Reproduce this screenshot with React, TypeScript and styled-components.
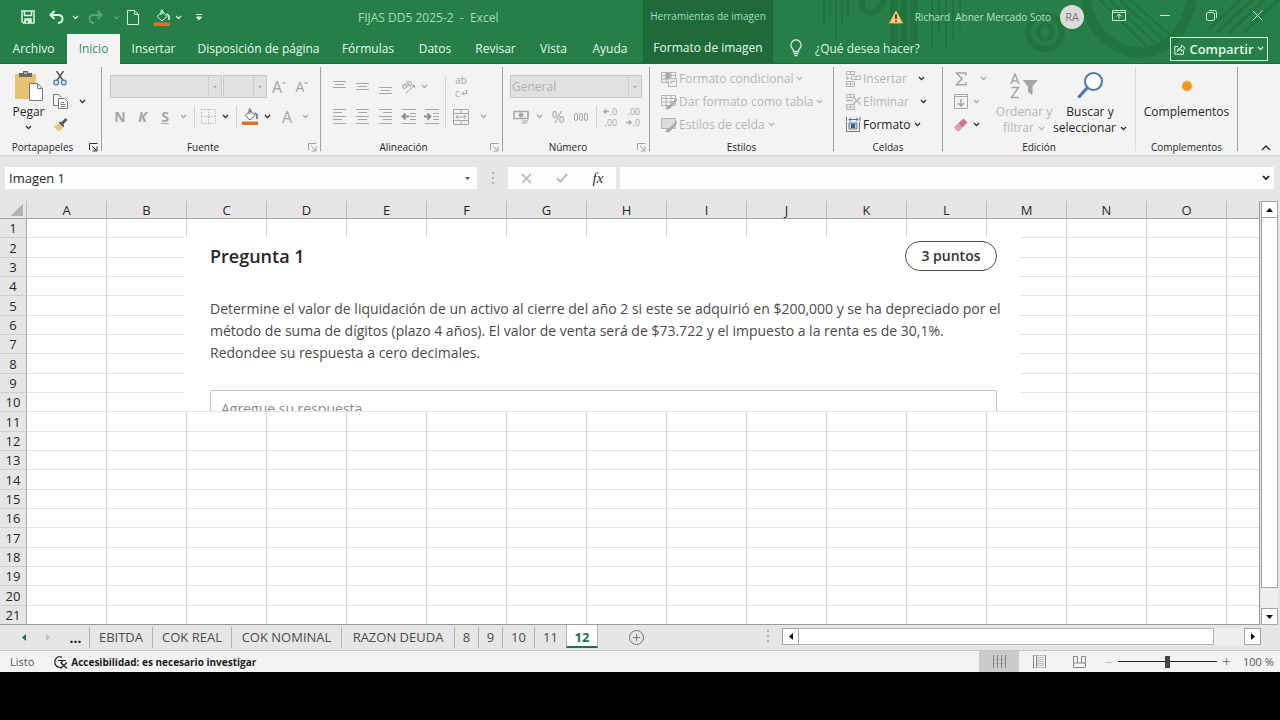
import React from "react";
import styled, { createGlobalStyle, css } from "styled-components";

const GlobalStyle = createGlobalStyle`
  *, *::before, *::after { box-sizing: border-box; }
  body {
    margin: 0;
    background: #000;
    font-family: "Open Sans", "Noto Sans", sans-serif;
    font-size: 12px;
    color: #262626;
  }
  button, input, select { font: inherit; color: inherit; margin: 0; }
  button { padding: 0; border: 0; background: none; }
  svg { display: block; flex: none; }
`;

const GREEN = "#267f47";
const DARK_GREEN = "#1f6a3b";
const MINT = "#d6f5df";
const CHROME = "#e6e6e6";
const RIBBON = "#f3f3f3";
const MUTED = "#a6a6a6";

/* ---------- Shared pieces ---------- */

const Window = styled.div`
  display: flex;
  flex-direction: column;
  background: ${CHROME};
`;

const IconButton = styled.button<{ $w: number; $off?: boolean }>`
  display: flex;
  align-items: center;
  justify-content: center;
  flex: none;
  width: ${(p) => p.$w}px;
  height: 23px;
  color: ${(p) => (p.$off ? MUTED : "#262626")};
`;

const Art = ({ w, h, children, sw = 1 }: { w: number; h: number; children: React.ReactNode; sw?: number }) => (
  <svg width={w} height={h} viewBox={`0 0 ${w} ${h}`} fill="none" stroke="currentColor" strokeWidth={sw} aria-hidden="true">
    {children}
  </svg>
);

const Chevron = () => (
  <Art w={7} h={5} sw={1.2}>
    <path d="M1 1 3.5 3.7 6 1" />
  </Art>
);

const Drop = ({ w, off, label }: { w: number; off?: boolean; label: string }) => (
  <IconButton $w={w} $off={off} aria-label={label}>
    <Chevron />
  </IconButton>
);

/* ---------- Header ---------- */

const Header = styled.header`
  position: relative;
  display: flex;
  height: 64px;
  background: ${GREEN};
  color: ${MINT};
  border-bottom: 1px solid #1d6a3a;
`;

const Pattern = styled.svg`
  position: absolute;
  top: 0;
  right: 0;
`;

const HeaderLeft = styled.div`
  flex: none;
  width: 643px;
`;

const QuickAccess = styled.div`
  display: flex;
  align-items: center;
  height: 34px;
  padding-left: 16px;
  button { color: ${MINT}; height: 32px; }
  button:disabled { color: #5aa475; }
`;

const DocTitle = styled.div`
  flex: 1;
  padding-left: 139px;
  white-space: pre;
  color: #a5dcb7;
`;

const TabRow = styled.nav`
  display: flex;
  height: 29px;
`;

const Tab = styled.button<{ $w: number; $active?: boolean }>`
  width: ${(p) => p.$w}px;
  height: 30px;
  padding-bottom: 2px;
  flex: none;
  white-space: nowrap;
  color: ${(p) => (p.$active ? "#3d8a58" : "#e4fbe9")};
  background: ${(p) => (p.$active ? RIBBON : "transparent")};
`;

const ContextTab = styled.div`
  flex: none;
  width: 130px;
  background: ${DARK_GREEN};
  display: flex;
  flex-direction: column;
  align-items: center;
`;

const ContextTitle = styled.div`
  height: 34px;
  line-height: 32px;
  font-size: 10px;
  white-space: nowrap;
  color: #a5dcb7;
`;

const HeaderRight = styled.div`
  position: relative;
  flex: 1;
`;

const AccountRow = styled.div`
  display: flex;
  align-items: center;
  justify-content: flex-end;
  height: 33px;
`;

const UserName = styled.span`
  margin: 0 9px 0 12px;
  font-size: 10px;
  white-space: pre;
  color: #b5e3c3;
`;

const Avatar = styled.span`
  width: 24px;
  height: 24px;
  margin-right: 12px;
  border-radius: 50%;
  background: #dcdcdc;
  color: #777;
  font-size: 11px;
  line-height: 24px;
  text-align: center;
`;

const WindowButton = styled.button`
  width: 46px;
  height: 33px;
  padding-bottom: 2px;
  display: flex;
  align-items: center;
  justify-content: center;
  color: #c4ecd0;
`;

const TellRow = styled.div`
  display: flex;
  align-items: center;
  height: 30px;
  padding: 0 12px 0 15px;
`;

const TellInput = styled.input`
  flex: 1;
  min-width: 0;
  margin-left: 11px;
  padding: 0;
  border: 0;
  background: none;
  outline: none;
  &::placeholder { color: #d9f7e1; opacity: 1; }
`;

const ShareButton = styled.button`
  display: flex;
  align-items: center;
  justify-content: space-between;
  width: 98px;
  height: 24px;
  margin-top: 1px;
  padding: 0 3px;
  border: 1px solid #c9f3d5;
  color: #e4fbe9;
  font-weight: 600;
  font-size: 13px;
`;

/* ---------- Ribbon ---------- */

const Ribbon = styled.div`
  display: flex;
  height: 91px;
  padding-top: 3px;
  background: ${RIBBON};
`;

const Group = styled.section<{ $w: number }>`
  flex: none;
  display: flex;
  flex-direction: column;
  width: ${(p) => p.$w}px;
  height: 88px;
`;

const Divider = styled.div<{ $light?: boolean }>`
  flex: none;
  width: 1px;
  height: 84px;
  background: ${(p) => (p.$light ? "#dcdcdc" : "#a0a0a0")};
`;

const Body = styled.div<{ $pad?: number }>`
  display: flex;
  height: 72px;
  padding-left: ${(p) => p.$pad ?? 0}px;
`;

const Caption = styled.div`
  display: flex;
  align-items: center;
  height: 16px;
  font-size: 10px;
  span { flex: 1; text-align: center; }
  button { width: 16px; height: 16px; display: flex; align-items: center; justify-content: center; }
`;

const Stack = styled.div`
  display: flex;
  flex-direction: column;
`;

const TwoRows = styled(Stack)`
  padding-top: 8px;
  gap: 7px;
`;

const Row = styled.div`
  display: flex;
  align-items: center;
  height: 23px;
`;

const ThinRule = styled.div<{ $w: number; $h?: number }>`
  flex: none;
  width: ${(p) => p.$w}px;
  height: ${(p) => p.$h ?? 22}px;
  background: linear-gradient(#d4d4d4, #d4d4d4) center / 1px 100% no-repeat;
`;

const BigButton = styled.button<{ $w: number; $off?: boolean }>`
  display: flex;
  flex-direction: column;
  align-items: center;
  flex: none;
  width: ${(p) => p.$w}px;
  color: ${(p) => (p.$off ? "#b4b4b4" : "#262626")};
  line-height: 16px;
  white-space: nowrap;
`;

const BigIcon = styled.span`
  display: flex;
  align-items: center;
  justify-content: center;
  height: 37px;
`;

const Inline = styled.span`
  display: flex;
  align-items: center;
  gap: 4px;
  min-height: 14px;
`;

const Command = styled.button<{ $off?: boolean; $gap?: number }>`
  display: flex;
  align-items: center;
  height: 23px;
  gap: 2px;
  white-space: nowrap;
  color: ${(p) => (p.$off ? "#b4b4b4" : "#262626")};
  svg:last-child { margin-left: ${(p) => p.$gap ?? 1}px; color: ${(p) => (p.$off && !p.$gap ? "#b4b4b4" : "#262626")}; }
`;

const SelectBox = styled.div<{ $w: number }>`
  position: relative;
  width: ${(p) => p.$w}px;
  height: 23px;
  border: 1px solid #c6c6c6;
  background: #e1e1e1;
  color: #b0b0b0;
  select {
    width: 100%;
    height: 100%;
    padding: 0 1px;
    border: 0;
    background: none;
    appearance: none;
    color: inherit;
    opacity: 1;
  }
  svg { position: absolute; right: 0; top: 0; }
`;

const Select = ({ w, label, text }: { w: number; label: string; text?: string }) => (
  <SelectBox $w={w}>
    <select aria-label={label} disabled>
      <option>{text ?? ""}</option>
    </select>
    <Art w={13} h={21}>
      <path d="M.5 0V21" stroke="#cdcdcd" />
      <path d="M5 10H9L7 12.2Z" fill="#a8a8a8" stroke="none" />
    </Art>
  </SelectBox>
);

const Letter = styled.span<{ $size?: number; $bold?: boolean; $italic?: boolean; $under?: boolean }>`
  font-size: ${(p) => p.$size ?? 14}px;
  font-weight: ${(p) => (p.$bold ? 700 : 400)};
  font-style: ${(p) => (p.$italic ? "italic" : "normal")};
  text-decoration: ${(p) => (p.$under ? "underline" : "none")};
`;

const RibbonEnd = styled.div`
  flex: 1;
  display: flex;
  align-items: flex-end;
  justify-content: flex-end;
  padding-right: 6px;
  height: 92px;
`;

const Launcher = ({ off }: { off?: boolean }) => (
  <button aria-label="Más opciones">
    <Art w={9} h={9}>
      <g stroke={off ? "#a0a0a0" : "#333"}>
        <path d="M.5 7V.5H8.5M3 3 7.5 7.5M8 3.5V8H3.5" />
      </g>
    </Art>
  </button>
);

const GroupCaption = ({ text, launcher }: { text: string; launcher?: "on" | "off" }) => (
  <Caption>
    <span>{text}</span>
    {launcher && <Launcher off={launcher === "off"} />}
  </Caption>
);

const Bucket = ({ light }: { light?: boolean }) => (
  <Art w={17} h={17}>
    <path d="M3 7.5 8.5 2.5 13 7.5 8 12Z" fill={light ? "none" : "#fff"} stroke={light ? MINT : "#666"} />
    <path d="M7 6V1.5Q7-.2 8.8 1.5V5" stroke={light ? MINT : "#666"} />
    <path d="M12.5 5Q16 6 14.8 11" stroke={light ? MINT : "#3f78b5"} strokeWidth="1.6" />
    <path d="M0 13.5H16V17H0Z" fill="#e0712a" stroke="none" />
  </Art>
);

const Lines = ({ ys, kind = "center" }: { ys: number[]; kind?: "left" | "center" | "right" }) => (
  <Art w={15} h={17}>
    {ys.map((y, i) => {
      const short = i % 2 === 1;
      const x1 = !short || kind === "left" ? 1 : kind === "center" ? 3 : 5;
      const x2 = !short || kind === "right" ? 14 : kind === "center" ? 12 : 10;
      return <path key={y} d={`M${x1} ${y + 0.5}H${x2}`} />;
    })}
  </Art>
);

const Indent = ({ right }: { right?: boolean }) => (
  <Art w={16} h={17}>
    <path d="M1 1.5H15M9 5.5H15M9 8.5H15M9 11.5H15M1 15.5H15" />
    <path d={right ? "M0 8.5H6M3.5 5.5 6.5 8.5 3.5 11.5" : "M8 8.5H2M4.5 5.5 1.5 8.5 4.5 11.5"} stroke="#8c8c8c" strokeWidth="1.8" />
  </Art>
);

const StyleIcon = ({ kind }: { kind: "cond" | "table" | "cell" }) => (
  <Art w={16} h={16}>
    <path d="M.5 1.5H14.5V11.5H.5Z" fill={kind === "cell" ? "#ddd" : "none"} />
    {kind !== "cell" && <path d="M.5 4.5H14.5M.5 8H14.5M5 1.5V11.5M10 1.5V11.5" />}
    {kind === "cond" ? (
      <>
        <path d="M5 2H9V8H5Z" fill="#a6a6a6" />
        <path d="M7.5 7.5H15.5V15.5H7.5Z" fill={RIBBON} />
        <path d="M9 13 13.5 9M9 10.5H14" />
      </>
    ) : (
      <path d="M15.5 4 9 11Q5 11 5 15 9 15.5 10.5 12.5L16 6" fill="#a6a6a6" />
    )}
  </Art>
);

const CellIcon = ({ kind }: { kind: "insert" | "delete" | "format" }) => (
  <Art w={16} h={16}>
    {kind === "format" ? (
      <>
        <path d="M1.5 5V14.5H14.5V5" stroke="#777" />
        <path d="M4 2.5H13M6 .5 4 2.5 6 4.5M11 .5 13 2.5 11 4.5M1.5 0V4M15 0V4" stroke="#4472b0" />
        <path d="M4 6H12V12H4Z" fill="#bcd0e8" stroke="#777" />
        <path d="M6 7H10V11H6Z" fill="#35619c" stroke="none" />
      </>
    ) : (
      <>
        <path d="M1.5 .5H9.5V3.5H1.5ZM5.5 .5V3.5M1.5 10.5H9.5V15.5H1.5ZM5.5 10.5V15.5M1.5 13H9.5" />
        {kind === "insert" ? (
          <path d="M6.5 5H15.5V8.5H6.5ZM11 5V8.5M5 7H1M3 5 1 7 3 9" />
        ) : (
          <path d="M1 6.5H8M8 3 15.5 10.5M15.5 3 8 10.5" strokeWidth="1.4" />
        )}
      </>
    )}
  </Art>
);

const TinyLines = styled.span<{ $wrap?: boolean }>`
  display: grid;
  font-size: ${(p) => (p.$wrap ? 10 : 9)}px;
  line-height: ${(p) => (p.$wrap ? 13 : 11)}px;
  text-align: right;
  white-space: nowrap;
  span {
    display: flex;
    align-items: center;
    justify-content: flex-end;
    gap: 1px;
    height: ${(p) => (p.$wrap ? 13 : 11)}px;
  }
`;

const TinyArrow = ({ right }: { right?: boolean }) => (
  <Art w={6} h={5} sw={1.4}>
    <path d={right ? "M0 2.5H5M3 .5 5 2.5 3 4.5" : "M6 2.5H1M3 .5 1 2.5 3 4.5"} />
  </Art>
);

/* ---------- Formula bar ---------- */

const FormulaBar = styled.div`
  display: flex;
  align-items: flex-start;
  height: 46px;
  padding: 11px 6px 0 5px;
  border-top: 1px solid #d4d4d4;
`;

const FieldBox = styled.div<{ $w?: number }>`
  display: flex;
  align-items: center;
  flex: ${(p) => (p.$w ? "none" : 1)};
  width: ${(p) => (p.$w ? `${p.$w}px` : "auto")};
  height: 22px;
  background: #fdfdfd;
  input {
    flex: 1;
    min-width: 0;
    padding: 0 4px;
    border: 0;
    outline: none;
    background: none;
    font-size: 13px;
    line-height: 20px;
  }
`;

const Dots = styled.div<{ $w: number }>`
  flex: none;
  display: flex;
  align-items: center;
  justify-content: center;
  width: ${(p) => p.$w}px;
  height: 22px;
  color: #b0b0b0;
`;

const FxBox = styled(FieldBox)`
  justify-content: space-around;
  margin-right: 4px;
`;

const Fx = styled.span`
  font: italic 15px "Liberation Serif", serif;
  color: #333;
`;

/* ---------- Sheet ---------- */

const SheetArea = styled.main`
  position: relative;
  display: flex;
`;

const Grid = styled.table`
  flex: 1;
  width: 100%;
  table-layout: fixed;
  border-collapse: separate;
  border-spacing: 0;
  border-right: 1px solid #9a9a9a;
  border-bottom: 1px solid #9a9a9a;
  background: #fff;
  font-size: 13px;
  line-height: 16px;
  th { padding: 0; font-weight: 400; background: ${CHROME}; text-align: center; }
  thead th { height: 18px; border-right: 1px solid #bcbcbc; border-bottom: 1px solid #a4a4a4; }
  tbody th { border-right: 1px solid #a4a4a4; border-bottom: 1px solid #cfcfcf; }
  tbody td { padding: 0; border-right: 1px solid #d2d2d2; border-bottom: 1px solid #e2e2e2; }
  tbody tr { height: 19px; }
  tbody tr:nth-child(3n + 2) { height: 20px; }
  tbody tr:last-child { height: 18px; }
  tbody tr:last-child > * { border-bottom: 0; }
  tr > *:last-child { border-right: 0; }
`;

const Corner = styled.th`
  background: linear-gradient(135deg, transparent 50%, #b4b4b4 50%) right 3px bottom 2px / 13px 13px no-repeat ${CHROME} !important;
`;

const ScrollColumn = styled.div`
  flex: none;
  display: flex;
  flex-direction: column;
  width: 20px;
  padding: 0 2px 0 1px;
  background: ${CHROME};
`;

const ScrollButton = styled.button`
  flex: none;
  display: flex;
  align-items: center;
  justify-content: center;
  width: 17px;
  height: 17px;
  background: #fff;
  border: 1px solid #a4a4a4;
  color: #111;
`;

const VTrack = styled.div`
  flex: 1;
  padding-bottom: 20px;
  background: #efefef;
  width: 17px;
`;

const VThumb = styled.div`
  height: 100%;
  background: #fff;
  border: 1px solid #a4a4a4;
  border-top: 0;
`;

const Picture = styled.article`
  position: absolute;
  left: 184px;
  top: 36px;
  width: 836px;
  height: 174px;
  padding: 4px 23px 0 26px;
  overflow: hidden;
  background: #fff;
  color: #4a4a4a;
`;

const PictureHead = styled.div`
  display: flex;
  align-items: center;
  justify-content: space-between;
  h1 { margin: 0; font-size: 18px; font-weight: 600; color: #262626; }
`;

const Points = styled.span`
  width: 92px;
  height: 30px;
  border: 1px solid #4a4a4a;
  border-radius: 15px;
  font-size: 14px;
  font-weight: 600;
  line-height: 28px;
  text-align: center;
  color: #333;
`;

const Question = styled.p`
  margin: 27px 0 26px;
  font-size: 14px;
  line-height: 22px;
  white-space: nowrap;
`;

const Answer = styled.input`
  display: block;
  width: 100%;
  height: 36px;
  padding: 0 10px;
  border: 1px solid #c4c4c4;
  border-radius: 2px;
  font-size: 14px;
  &::placeholder { color: #8a8a8a; opacity: 1; }
`;

/* ---------- Sheet tabs ---------- */

const SheetBar = styled.div`
  display: flex;
  align-items: flex-start;
  height: 26px;
  padding: 0 19px 0 14px;
  border-bottom: 1px solid #c8c8c8;
`;

const NavButton = styled.button<{ $w: number; $off?: boolean }>`
  display: flex;
  align-items: center;
  justify-content: center;
  flex: none;
  width: ${(p) => p.$w}px;
  height: 24px;
  color: ${(p) => (p.$off ? "#bdbdbd" : "#222")};
`;

const SheetTab = styled.button<{ $w: number; $active?: boolean }>`
  flex: none;
  width: ${(p) => p.$w}px;
  height: ${(p) => (p.$active ? 23 : 21)}px;
  margin-top: ${(p) => (p.$active ? 0 : 2)}px;
  font-size: 13px;
  line-height: 21px;
  white-space: nowrap;
  color: #4c4c4c;
  border-left: 1px solid #b4b4b4;
  ${(p) =>
    p.$active &&
    css`
      padding-top: 2px;
      background: #fff;
      color: #217346;
      font-weight: 700;
      border-right: 1px solid #b4b4b4;
      border-bottom: 2px solid #217346;
    `}
`;

const HScroll = styled.div`
  flex: none;
  display: flex;
  width: 479px;
  margin-top: 3px;
  background: #efefef;
`;

const HThumb = styled.div`
  width: 415px;
  height: 17px;
  border: 1px solid #b4b4b4;
  border-left: 0;
  background: #fff;
`;

const Spacer = styled.div`
  flex: 1;
`;

/* ---------- Status bar ---------- */

const StatusBar = styled.footer`
  display: flex;
  align-items: center;
  height: 21px;
  padding: 0 8px 0 10px;
  background: ${RIBBON};
  font-size: 11px;
  color: #555;
`;

const A11yButton = styled.button`
  display: flex;
  align-items: center;
  gap: 3px;
  margin-left: 20px;
  font-size: 10px;
  font-weight: 700;
  color: #1c1c1c;
`;

const ViewButton = styled.button<{ $active?: boolean }>`
  display: flex;
  align-items: center;
  justify-content: center;
  width: 40px;
  height: 21px;
  color: #858585;
  background: ${(p) => (p.$active ? "#cbcbcb" : "transparent")};
`;

const ZoomButton = styled.button<{ $faint?: boolean }>`
  width: 19px;
  height: 20px;
  font-size: 14px;
  line-height: 18px;
  color: ${(p) => (p.$faint ? "#bbb" : "#777")};
`;

const ZoomRange = styled.input`
  appearance: none;
  width: 99px;
  height: 20px;
  background: linear-gradient(#222, #222) center / 100% 1px no-repeat;
  &::-webkit-slider-thumb {
    appearance: none;
    width: 5px;
    height: 12px;
    background: #444;
  }
`;

const ZoomValue = styled.span`
  margin-left: 7px;
  width: 29px;
  white-space: nowrap;
`;

/* ---------- Data ---------- */

const TABS: [string, number][] = [
  ["Archivo", 67],
  ["Inicio", 53],
  ["Insertar", 67],
  ["Disposición de página", 143],
  ["Fórmulas", 76],
  ["Datos", 58],
  ["Revisar", 63],
  ["Vista", 53],
  ["Ayuda", 60],
];

const COLUMNS = "ABCDEFGHIJKLMNO".split("");
const ROWS = Array.from({ length: 21 }, (_, i) => i + 1);

const SHEETS: [string, number][] = [
  ["EBITDA", 63],
  ["COK REAL", 79],
  ["COK NOMINAL", 110],
  ["RAZON DEUDA", 113],
  ["8", 24],
  ["9", 24],
  ["10", 32],
  ["11", 32],
  ["12", 32],
];

/* ---------- Sections ---------- */

const TopHeader = () => (
  <Header>
    <Pattern width="470" height="63" viewBox="0 0 470 63" fill="none" aria-hidden="true">
      <g stroke="#21733f">
        <path d="M14 0V24M20 0V18M26 0V38M32 0V26M38 0V18M122 0V48M129 0V32M136 0V46M143 0V40M150 0V28" strokeWidth="2" />
        <path d="M52 0V8Q64 20 74 0" strokeWidth="6" />
        <path d="M84 0V48M94 0V52M104 0V46" strokeWidth="8" />
        <circle cx="235" cy="32" r="17" strokeWidth="6" />
        <circle cx="235" cy="32" r="7" strokeWidth="5" />
        <path d="M276 0Q282 40 320 52 368 58 382 0" strokeWidth="10" />
        <path d="M290 0 344 54M300 0 354 52M310 0 362 48M320 0 368 42" strokeWidth="2" />
        <path d="M398 30 430 0M408 32 442 0M418 34 454 0M434 32 468 0" strokeWidth="3" />
      </g>
    </Pattern>
    <HeaderLeft>
      <QuickAccess>
        <IconButton $w={24} aria-label="Guardar">
          <Art w={14} h={14} sw={1.5}>
            <path d="M1 1H13V13H2.5L1 11.5Z" />
            <path d="M3.5 1V5.5H10.5V1" />
            <path d="M4 13V9H10V13" fill={MINT} />
            <path d="M6 10.5V13" stroke={GREEN} />
          </Art>
        </IconButton>
        <IconButton $w={33} aria-label="Deshacer">
          <Art w={15} h={14} sw={2}>
            <path d="M5.5 1 1.5 5 5.5 9M2 5H9Q13.5 5 13.5 9 13.5 12.5 9 13" />
          </Art>
        </IconButton>
        <Drop w={4} label="Opciones de deshacer" />
        <IconButton $w={36} disabled aria-label="Rehacer">
          <Art w={15} h={14} sw={2}>
            <path d="M9.5 1 13.5 5 9.5 9M13 5H6Q1.5 5 1.5 9 1.5 12.5 6 13" />
          </Art>
        </IconButton>
        <IconButton $w={6} disabled aria-label="Opciones de rehacer">
          <Chevron />
        </IconButton>
        <IconButton $w={28} aria-label="Nuevo">
          <Art w={12} h={15}>
            <path d="M.5 .5H7.5L11.5 4.5V14.5H.5ZM7.5 .5V4.5H11.5" />
          </Art>
        </IconButton>
        <IconButton $w={30} aria-label="Color de relleno">
          <Bucket light />
        </IconButton>
        <Drop w={2} label="Opciones de relleno" />
        <IconButton $w={40} aria-label="Personalizar barra">
          <Art w={6} h={7}>
            <path d="M0 .5H6" />
            <path d="M.5 3H5.5L3 6Z" fill={MINT} />
          </Art>
        </IconButton>
        <DocTitle>{"FIJAS DD5 2025-2  -  Excel"}</DocTitle>
      </QuickAccess>
      <TabRow>
        {TABS.map(([t, w]) => (
          <Tab key={t} $w={w} $active={t === "Inicio"}>
            {t}
          </Tab>
        ))}
      </TabRow>
    </HeaderLeft>
    <ContextTab>
      <ContextTitle>Herramientas de imagen</ContextTitle>
      <Tab $w={130}>Formato de imagen</Tab>
    </ContextTab>
    <HeaderRight>
      <AccountRow>
        <Art w={14} h={14}>
          <path d="M7 1 13.5 13H.5Z" fill="#fbd07c" stroke="#f2a93a" />
          <path d="M7 4.5V9M7 10.2V11.8" stroke="#222" strokeWidth="1.6" />
        </Art>
        <UserName>{"Richard  Abner Mercado Soto"}</UserName>
        <Avatar>RA</Avatar>
        <WindowButton aria-label="Opciones de la cinta">
          <Art w={14} h={11}>
            <path d="M.5 .5H13.5V10.5H.5ZM.5 2.5H13.5M7 9V4.5M4.5 6.5 7 4 9.5 6.5" />
          </Art>
        </WindowButton>
        <WindowButton aria-label="Minimizar">
          <Art w={10} h={10}>
            <path d="M0 4.5H10" />
          </Art>
        </WindowButton>
        <WindowButton aria-label="Restaurar">
          <Art w={11} h={11}>
            <rect x=".5" y="2.5" width="8" height="8" rx="1.5" />
            <path d="M3 .5H8.5Q10.5 .5 10.5 2.5V8" />
          </Art>
        </WindowButton>
        <WindowButton aria-label="Cerrar">
          <Art w={11} h={11}>
            <path d="M.5 .5 10.5 10.5M10.5 .5 .5 10.5" />
          </Art>
        </WindowButton>
      </AccountRow>
      <TellRow>
        <Art w={16} h={18} sw={1.3}>
          <path d="M5.5 12.5Q5.5 10.5 4 9A5 5 0 1 1 12 9Q10.5 10.5 10.5 12.5ZM5.5 14.5H10.5M6.5 16.5H9.5" />
        </Art>
        <TellInput aria-label="¿Qué desea hacer?" placeholder="¿Qué desea hacer?" />
        <ShareButton>
          <Art w={12} h={12}>
            <path d="M4 3.5H.8V11.2H9.5V8M3 8.5Q3.5 4.8 7.5 4.5V2L11.2 5.3 7.5 8.5V6.5Q4.5 6.5 3 8.5Z" />
          </Art>
          Compartir
          <Chevron />
        </ShareButton>
      </TellRow>
    </HeaderRight>
  </Header>
);

const RibbonBar = () => (
  <Ribbon>
    <Group $w={101}>
      <Body>
        <BigButton $w={57}>
          <BigIcon>
            <Art w={29} h={32}>
              <path d="M1 4H22V29H1Z" fill="#e6c372" stroke="none" />
              <path d="M5 7V3H9V1H14V3H18V7Z" fill="#6a6a6a" stroke="none" />
              <path d="M10 3H13" stroke={RIBBON} />
              <path d="M15.5 13.5H23.5L28.5 18.5V30.5H15.5ZM23.5 13.5V18.5H28.5" fill="#fff" stroke="#777" />
            </Art>
          </BigIcon>
          Pegar
          <Inline>
            <Chevron />
          </Inline>
        </BigButton>
        <Stack>
          <IconButton $w={6} aria-label="Cortar">
            <Art w={14} h={15}>
              <path d="M3.5 0 10 9.5M10.5 0 4 9.5" stroke="#555" strokeWidth="1.5" />
              <circle cx="3.2" cy="11.5" r="2.4" stroke="#3f78b5" strokeWidth="1.2" />
              <circle cx="10.8" cy="11.5" r="2.4" stroke="#3f78b5" strokeWidth="1.2" />
            </Art>
          </IconButton>
          <IconButton $w={6} aria-label="Copiar">
            <Art w={15} h={15}>
              <path d="M5 11.5H.5V.5H5.5L8.5 3.5" stroke="#777" />
              <path d="M5.5 4.5H11.5L14.5 7.5V14.5H5.5ZM7.5 8.5H11M7.5 10.5H12.5M7.5 12.5H12.5" fill="#fff" stroke="#777" />
            </Art>
          </IconButton>
          <IconButton $w={6} aria-label="Copiar formato">
            <Art w={15} h={14}>
              <path d="M1 8 6 5.5 10 9.5 7 13Q3 12.5 1 8Z" fill="#e6c372" stroke="none" />
              <path d="M5.5 4.5 7.5 3.5 11 7 10.5 9.5Z" fill="#555" stroke="none" />
              <path d="M9 5.5 13.5 1" stroke="#555" strokeWidth="2.6" />
            </Art>
          </IconButton>
        </Stack>
        <Stack>
          <Row />
          <Drop w={38} label="Opciones de copiar" />
        </Stack>
      </Body>
      <GroupCaption text="Portapapeles" launcher="on" />
    </Group>
    <Divider />
    <Group $w={218}>
      <Body $pad={8}>
        <TwoRows>
          <Row>
            <Select w={112} label="Fuente" />
            <ThinRule $w={1} $h={0} />
            <Select w={44} label="Tamaño de fuente" />
            <IconButton $w={24} $off aria-label="Aumentar tamaño">
              <Letter $size={16}>A</Letter>
              <Art w={4} h={12}><path d="M.5 3 2 1 3.5 3" /></Art>
            </IconButton>
            <IconButton $w={22} $off aria-label="Reducir tamaño">
              <Letter $size={14}>A</Letter>
              <Art w={4} h={12}><path d="M.5 1 2 3 3.5 1" /></Art>
            </IconButton>
          </Row>
          <Row>
            <IconButton $w={20} $off><Letter $bold>N</Letter></IconButton>
            <IconButton $w={25} $off><Letter $bold $italic>K</Letter></IconButton>
            <IconButton $w={20} $off><Letter $bold $under>S</Letter></IconButton>
            <Drop w={16} off label="Subrayado" />
            <ThinRule $w={6} />
            <IconButton $w={22} $off aria-label="Bordes">
              <Art w={15} h={15}>
                <path d="M.5 .5H14.5V14.5H.5ZM7.5 .5V14.5M.5 7.5H14.5" strokeDasharray="1 1.5" />
              </Art>
            </IconButton>
            <Drop w={12} label="Opciones de bordes" />
            <ThinRule $w={10} />
            <IconButton $w={18} aria-label="Relleno"><Bucket /></IconButton>
            <Drop w={16} label="Opciones de relleno" />
            <IconButton $w={24} $off><Letter $size={16}>A</Letter></IconButton>
            <Drop w={12} off label="Color de fuente" />
          </Row>
        </TwoRows>
      </Body>
      <GroupCaption text="Fuente" launcher="off" />
    </Group>
    <Divider />
    <Group $w={181}>
      <Body $pad={7}>
        <TwoRows>
          <Row>
            <IconButton $w={23} $off aria-label="Alinear arriba"><Lines ys={[3, 6, 9]} /></IconButton>
            <IconButton $w={23} $off aria-label="Alinear al medio"><Lines ys={[5, 8, 11]} /></IconButton>
            <IconButton $w={23} $off aria-label="Alinear abajo"><Lines ys={[9, 12, 15]} /></IconButton>
            <IconButton $w={23} $off aria-label="Orientación">
              <Art w={15} h={15}>
                <circle cx="3.5" cy="7.5" r="2" />
                <path d="M3.8 4 7 8M5 1.5 9.5 7.5" />
                <circle cx="8.6" cy="4.4" r="2" />
                <path d="M5 14 13.5 6.5M11 6.5H13.5V9" />
              </Art>
            </IconButton>
            <Drop w={8} off label="Opciones de orientación" />
          </Row>
          <Row>
            <IconButton $w={23} $off aria-label="Izquierda"><Lines ys={[1, 4, 8, 11, 15]} kind="left" /></IconButton>
            <IconButton $w={23} $off aria-label="Centrar"><Lines ys={[1, 4, 8, 11, 15]} /></IconButton>
            <IconButton $w={23} $off aria-label="Derecha"><Lines ys={[1, 4, 8, 11, 15]} kind="right" /></IconButton>
            <IconButton $w={23} $off aria-label="Disminuir sangría"><Indent /></IconButton>
            <IconButton $w={23} $off aria-label="Aumentar sangría"><Indent right /></IconButton>
          </Row>
        </TwoRows>
        <TwoRows>
          <ThinRule $w={4} $h={54} />
        </TwoRows>
        <TwoRows>
          <IconButton $w={28} $off aria-label="Ajustar texto">
            <TinyLines $wrap>
              <span>ab</span>
              <span>
                c
                <Art w={6} h={6}><path d="M5.5 0V3.5H1M3 1.5 1 3.5 3 5.5" /></Art>
              </span>
            </TinyLines>
          </IconButton>
          <Row>
            <IconButton $w={28} $off aria-label="Combinar">
              <Art w={16} h={16}>
                <path d="M.5 .5H15.5V15.5H.5ZM.5 4.5H15.5M.5 11.5H15.5M8 .5V4.5M8 11.5V15.5M3 8H13M5 6 3 8 5 10M11 6 13 8 11 10" />
              </Art>
            </IconButton>
            <Drop w={16} off label="Opciones de combinar" />
          </Row>
        </TwoRows>
      </Body>
      <GroupCaption text="Alineación" launcher="off" />
    </Group>
    <Divider />
    <Group $w={146}>
      <Body $pad={7}>
        <TwoRows>
          <Select w={132} label="Formato de número" text="General" />
          <Row>
            <IconButton $w={21} $off aria-label="Moneda">
              <Art w={16} h={14}>
                <path d="M1 1.5H15V8.5H1Z" strokeWidth="1.6" />
                <circle cx="8" cy="5" r="2" fill="#a6a6a6" />
                <path d="M9 11H15M9 13H14" />
              </Art>
            </IconButton>
            <Drop w={16} off label="Opciones de moneda" />
            <IconButton $w={22} $off><Letter $size={16}>%</Letter></IconButton>
            <IconButton $w={24} $off aria-label="Millares">
              <Art w={14} h={8}>
                <rect x=".5" y=".5" width="3" height="7" rx="1.5" />
                <rect x="5.5" y=".5" width="3" height="7" rx="1.5" />
                <rect x="10.5" y=".5" width="3" height="7" rx="1.5" />
              </Art>
            </IconButton>
            <ThinRule $w={6} />
            <IconButton $w={22} $off aria-label="Aumentar decimales">
              <TinyLines><span><TinyArrow />,0</span><span>,00</span></TinyLines>
            </IconButton>
            <IconButton $w={24} $off aria-label="Disminuir decimales">
              <TinyLines><span>,00</span><span><TinyArrow right />,0</span></TinyLines>
            </IconButton>
          </Row>
        </TwoRows>
      </Body>
      <GroupCaption text="Número" launcher="off" />
    </Group>
    <Divider />
    <Group $w={183}>
      <Body $pad={11}>
        <Stack>
          <Command $off><StyleIcon kind="cond" />Formato condicional<Chevron /></Command>
          <Command $off><StyleIcon kind="table" />Dar formato como tabla<Chevron /></Command>
          <Command $off><StyleIcon kind="cell" />Estilos de celda<Chevron /></Command>
        </Stack>
      </Body>
      <GroupCaption text="Estilos" />
    </Group>
    <Divider />
    <Group $w={108}>
      <Body $pad={11}>
        <Stack>
          <Command $off $gap={9}><CellIcon kind="insert" />Insertar<Chevron /></Command>
          <Command $off $gap={9}><CellIcon kind="delete" />Eliminar<Chevron /></Command>
          <Command><CellIcon kind="format" />Formato<Chevron /></Command>
        </Stack>
      </Body>
      <GroupCaption text="Celdas" />
    </Group>
    <Divider />
    <Group $w={192}>
      <Body $pad={8}>
        <Stack>
          <Row>
            <IconButton $w={20} $off aria-label="Autosuma">
              <Art w={12} h={14} sw={1.6}><path d="M11 3.5V1H1.5L7 6.8 1.5 12.8H11V10.3" /></Art>
            </IconButton>
            <Drop w={24} off label="Opciones de autosuma" />
          </Row>
          <Row>
            <IconButton $w={20} $off aria-label="Rellenar">
              <Art w={14} h={15}>
                <path d="M.5 .5H13.5V14.5H.5ZM.5 2.5H13.5" />
                <path d="M7 5V12M4 9 7 12 10 9" strokeWidth="1.6" />
              </Art>
            </IconButton>
            <Drop w={10} off label="Opciones de rellenar" />
          </Row>
          <Row>
            <IconButton $w={20} aria-label="Borrar">
              <Art w={14} h={14}>
                <path d="M4.5 5.5 9.5 1 13 4.5 8 9.5Z" fill="#d8708f" stroke="#d8708f" />
                <path d="M3.5 6.5 7 10.2 5 12.5H3.5L1 9.5Z" fill="#e8a3b6" stroke="#d8708f" />
              </Art>
            </IconButton>
            <Drop w={10} label="Opciones de borrar" />
          </Row>
        </Stack>
        <BigButton $w={58} $off>
          <BigIcon>
            <Art w={28} h={26} sw={1.5}>
              <g stroke="#a6a6a6">
                <path d="M1 11 5 1 9 11M2.5 8H7.5M1.5 14.5H8.5L1.5 24.5H9" />
                <path d="M13.5 7.5H27L22 13.5V21.5L18.5 19V13.5Z" fill="#a6a6a6" strokeWidth="1" />
              </g>
            </Art>
          </BigIcon>
          <span>Ordenar y</span>
          <Inline>filtrar<Chevron /></Inline>
        </BigButton>
        <BigButton $w={74}>
          <BigIcon>
            <Art w={26} h={28}>
              <circle cx="16.5" cy="9.5" r="8.5" fill="#fff" stroke="#4a76ae" strokeWidth="2" />
              <path d="M10 16 1.5 25.5" stroke="#4a76ae" strokeWidth="3.2" />
            </Art>
          </BigIcon>
          <span>Buscar y</span>
          <Inline>seleccionar<Chevron /></Inline>
        </BigButton>
      </Body>
      <GroupCaption text="Edición" />
    </Group>
    <Divider $light />
    <Group $w={101}>
      <Body>
        <BigButton $w={101}>
          <BigIcon>
            <Art w={12} h={12}><circle cx="6" cy="6" r="5" fill="#f0941f" stroke="#f7bd6c" /></Art>
          </BigIcon>
          Complementos
        </BigButton>
      </Body>
      <GroupCaption text="Complementos" />
    </Group>
    <Divider />
    <RibbonEnd>
      <IconButton $w={16} aria-label="Contraer la cinta">
        <Art w={10} h={6} sw={1.4}><path d="M1 5 5 1 9 5" /></Art>
      </IconButton>
    </RibbonEnd>
  </Ribbon>
);

const DotColumn = () => (
  <Art w={2} h={12}>
    <path d="M1 0V2M1 5V7M1 10V12" strokeWidth="2" />
  </Art>
);

const Formula = () => (
  <FormulaBar>
    <FieldBox $w={472}>
      <input aria-label="Cuadro de nombres" defaultValue="Imagen 1" />
      <IconButton $w={20} aria-label="Ver nombres">
        <Art w={5} h={3}><path d="M0 0H5L2.5 3Z" fill="#555" stroke="none" /></Art>
      </IconButton>
    </FieldBox>
    <Dots $w={31}><DotColumn /></Dots>
    <FxBox $w={108}>
      <IconButton $w={24} $off aria-label="Cancelar">
        <Art w={11} h={11} sw={1.8}><g stroke="#c0c0c0"><path d="M1 1 10 10M10 1 1 10" /></g></Art>
      </IconButton>
      <IconButton $w={24} $off aria-label="Introducir">
        <Art w={12} h={10} sw={2.4}><g stroke="#c0c0c0"><path d="M1 5.5 4.5 8.5 11 1" /></g></Art>
      </IconButton>
      <IconButton $w={24} aria-label="Insertar función"><Fx>fx</Fx></IconButton>
    </FxBox>
    <FieldBox>
      <input aria-label="Barra de fórmulas" />
      <IconButton $w={16} aria-label="Expandir">
        <Art w={8} h={6} sw={1.8}><path d="M1 1 4 4.2 7 1" /></Art>
      </IconButton>
    </FieldBox>
  </FormulaBar>
);

const Sheet = () => (
  <SheetArea>
    <Grid>
      <colgroup>
        <col width="27" />
        {COLUMNS.map((c) => <col key={c} width="80" />)}
        <col />
      </colgroup>
      <thead>
        <tr>
          <Corner aria-label="Seleccionar todo" />
          {COLUMNS.map((c) => <th key={c} scope="col">{c}</th>)}
          <th />
        </tr>
      </thead>
      <tbody>
        {ROWS.map((r) => (
          <tr key={r}>
            <th scope="row">{r}</th>
            {COLUMNS.map((c) => <td key={c} />)}
            <td />
          </tr>
        ))}
      </tbody>
    </Grid>
    <ScrollColumn>
      <ScrollButton aria-label="Subir">
        <Art w={7} h={4}><path d="M0 4 3.5 0 7 4Z" fill="currentColor" stroke="none" /></Art>
      </ScrollButton>
      <VTrack><VThumb /></VTrack>
      <ScrollButton aria-label="Bajar">
        <Art w={7} h={4}><path d="M0 0 3.5 4 7 0Z" fill="currentColor" stroke="none" /></Art>
      </ScrollButton>
    </ScrollColumn>
    <Picture>
      <PictureHead>
        <h1>Pregunta 1</h1>
        <Points>3 puntos</Points>
      </PictureHead>
      <Question>
        Determine el valor de liquidación de un activo al cierre del año 2 si este se adquirió en $200,000 y se ha
        depreciado por el
        <br />
        método de suma de dígitos (plazo 4 años). El valor de venta será de $73.722 y el impuesto a la renta es de 30,1%.
        <br />
        Redondee su respuesta a cero decimales.
      </Question>
      <Answer aria-label="Respuesta" placeholder="Agregue su respuesta" />
    </Picture>
  </SheetArea>
);

const SheetTabs = () => (
  <SheetBar>
    <NavButton $w={20} aria-label="Hoja anterior">
      <Art w={4} h={7}><path d="M4 0V7L0 3.5Z" fill="#217346" stroke="none" /></Art>
    </NavButton>
    <NavButton $w={28} $off aria-label="Hoja siguiente">
      <Art w={4} h={7}><path d="M0 0V7L4 3.5Z" fill="currentColor" stroke="none" /></Art>
    </NavButton>
    <NavButton $w={27} aria-label="Más hojas">
      <Letter $bold>…</Letter>
    </NavButton>
    {SHEETS.map(([name, w]) => (
      <SheetTab key={name} $w={w} $active={name === "12"}>{name}</SheetTab>
    ))}
    <NavButton $w={76} aria-label="Hoja nueva">
      <Art w={15} h={15}>
        <g stroke="#777"><circle cx="7.5" cy="7.5" r="7" /><path d="M7.5 4V11M4 7.5H11" /></g>
      </Art>
    </NavButton>
    <Spacer />
    <Dots $w={29}><DotColumn /></Dots>
    <HScroll>
      <ScrollButton aria-label="Izquierda">
        <Art w={4} h={7}><path d="M4 0V7L0 3.5Z" fill="currentColor" stroke="none" /></Art>
      </ScrollButton>
      <HThumb />
      <Spacer />
      <ScrollButton aria-label="Derecha">
        <Art w={4} h={7}><path d="M0 0V7L4 3.5Z" fill="currentColor" stroke="none" /></Art>
      </ScrollButton>
    </HScroll>
  </SheetBar>
);

const Status = () => (
  <StatusBar>
    Listo
    <A11yButton>
      <Art w={14} h={14} sw={1.2}>
        <path d="M6 1.5A5.5 5.5 0 1 0 6.5 12.5M7 1V3M4 5.5H12M8 5.5V8M6.5 7.5 13 13.5M13 7.5 6.5 13.5" />
      </Art>
      Accesibilidad: es necesario investigar
    </A11yButton>
    <Spacer />
    <ViewButton $active aria-label="Normal">
      <Art w={13} h={13}>
        <path d="M.5 0V13M4.5 0V13M8.5 0V13M12.5 0V13" />
        <path d="M0 4.5H13M0 8.5H13" strokeOpacity=".35" />
      </Art>
    </ViewButton>
    <ViewButton aria-label="Diseño de página">
      <Art w={13} h={13}>
        <path d="M.5 0V13M12.5 0V13M3.5 .5V12.5" />
        <path d="M.5 .5H12.5M.5 12.5H12.5M5 2.5H10V10.5H5ZM6 4.5H9M6 6.5H9M6 8.5H9" strokeOpacity=".5" />
      </Art>
    </ViewButton>
    <ViewButton aria-label="Vista previa de salto de página">
      <Art w={13} h={12}><path d="M4.5 .5H.5V11.5H12.5V.5H8.5M4.5 .5V7M8.5 .5V7M.5 7H12.5" /></Art>
    </ViewButton>
    <ZoomButton $faint aria-label="Alejar">−</ZoomButton>
    <ZoomRange type="range" min={0} max={200} defaultValue={100} aria-label="Zoom" />
    <ZoomButton aria-label="Acercar">+</ZoomButton>
    <ZoomValue>100 %</ZoomValue>
  </StatusBar>
);

export default function App() {
  return (
    <>
      <GlobalStyle />
      <Window>
        <TopHeader />
        <RibbonBar />
        <Formula />
        <Sheet />
        <SheetTabs />
        <Status />
      </Window>
    </>
  );
}
